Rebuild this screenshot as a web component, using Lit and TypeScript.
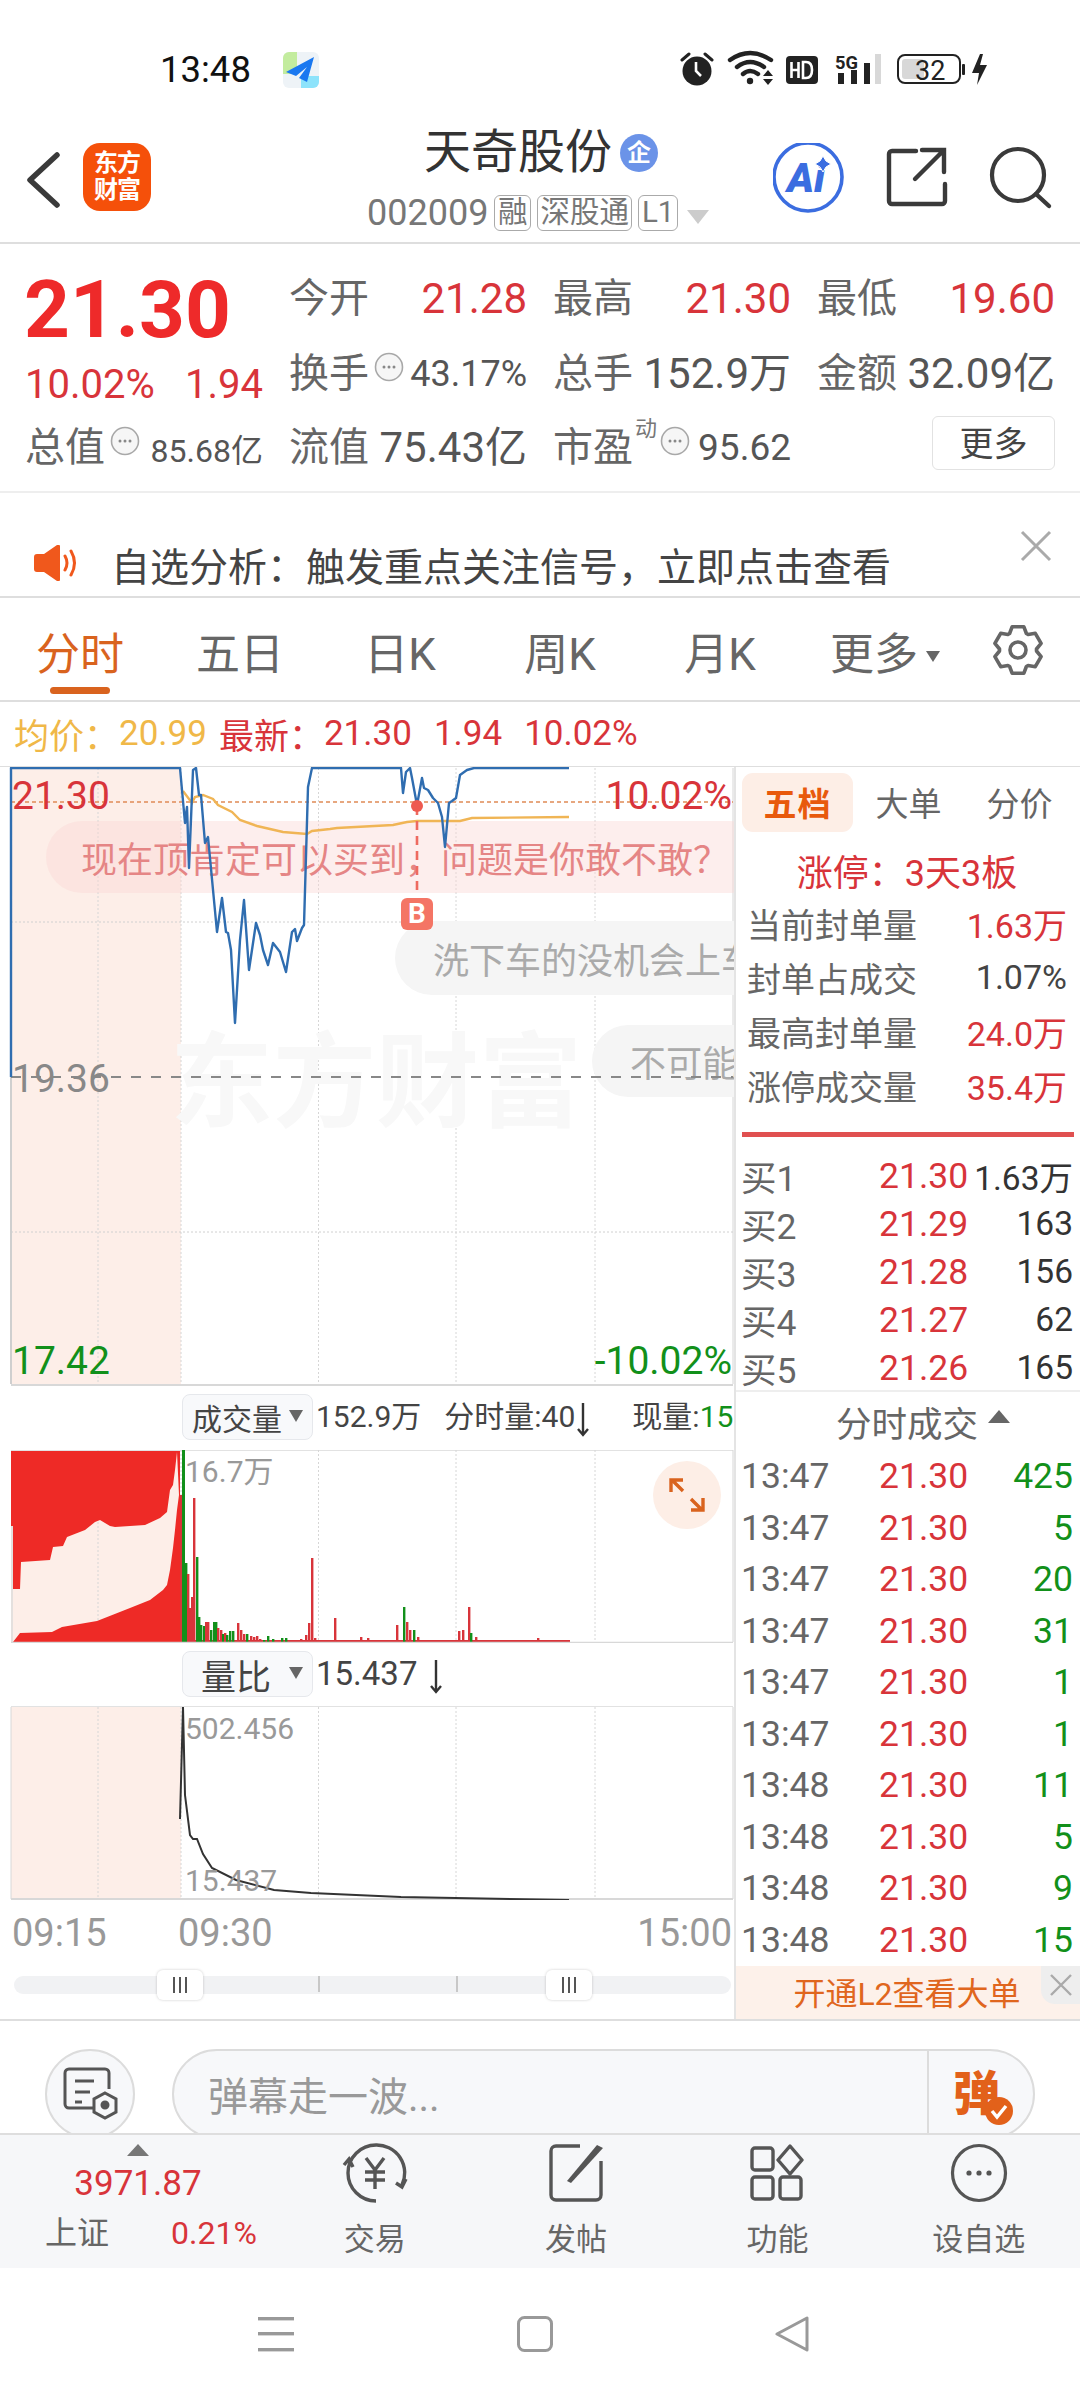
import {css, html, LitElement, svg} from 'lit';
import {customElement} from 'lit/decorators.js';

type Pt = [number, number];

const toPath = (pts: Pt[]) => pts.map((p) => p.join(',')).join(' ');

const BLUE_LINE: Pt[] = [[11, 1077], [11, 768], [180, 768], [185, 823], [187, 807], [189, 868], [193, 770], [196, 768], [199, 795], [201, 795], [205, 843], [208, 837], [217, 932], [222, 898], [226, 932], [228, 933], [231, 950], [235, 1023], [240, 940], [244, 900], [249, 970], [256, 923], [260, 935], [263, 950], [268, 965], [273, 943], [280, 952], [286, 972], [292, 932], [295, 929], [297, 941], [302, 928], [304, 925], [308, 787], [312, 768], [401, 768], [403, 793], [406, 772], [410, 768], [412, 778], [417, 805], [422, 778], [424, 788], [428, 790], [433, 798], [438, 803], [442, 817], [445, 847], [449, 803], [452, 801], [456, 798], [460, 775], [467, 770], [474, 768], [569, 768]];

const AVG_LINE: Pt[] = [[183, 791], [192, 803], [195, 797], [203, 795], [213, 799], [218, 805], [232, 812], [240, 820], [257, 826], [283, 832], [307, 834], [312, 831], [330, 829], [337, 828], [393, 825], [407, 822], [417, 821], [460, 821], [472, 818], [569, 817]];

const RATIO_LINE: Pt[] = [[180, 1819], [183, 1707], [185, 1795], [190, 1835], [193, 1839], [197, 1839], [203, 1854], [212, 1868], [236, 1880], [274, 1890], [311, 1893], [401, 1897], [569, 1900]];

const CREAM_TOP: Pt[] = [[13, 1589], [20, 1589], [21, 1562], [50, 1560], [53, 1547], [63, 1546], [67, 1537], [85, 1530], [95, 1522], [100, 1520], [110, 1526], [115, 1527], [145, 1525], [160, 1518], [167, 1512], [170, 1490], [173, 1485], [175, 1470], [177, 1452]];
const CREAM_BOTTOM: Pt[] = [[179, 1495], [177, 1510], [175, 1530], [173, 1548], [170, 1570], [167, 1585], [163, 1590], [150, 1600], [130, 1608], [97, 1621], [62, 1627], [52, 1632], [20, 1633], [13, 1642]];

// x, top y, green?
const VOL_BARS: [number, number, boolean][] = [[180, 1495, false], [182, 1450, true], [185, 1563, true], [187, 1574, false], [189, 1608, false], [191, 1597, false], [193, 1498, false], [196, 1557, true], [198, 1617, true], [200, 1625, true], [203, 1626, true], [205, 1622, false], [207, 1622, false], [210, 1630, true], [213, 1622, true], [215, 1622, true], [217, 1628, false], [220, 1630, false], [222, 1634, true], [224, 1633, false], [226, 1635, true], [229, 1631, true], [232, 1631, true], [237, 1623, false], [240, 1630, false], [243, 1634, false], [246, 1634, true], [250, 1636, false], [253, 1637, false], [256, 1636, false], [259, 1639, false], [263, 1640, true], [267, 1636, true], [272, 1639, true], [281, 1638, true], [285, 1638, true], [300, 1639, false], [305, 1635, false], [308, 1623, false], [311, 1558, false], [314, 1638, false], [334, 1618, false], [360, 1637, false], [367, 1638, false], [396, 1625, false], [403, 1607, true], [406, 1622, false], [409, 1630, false], [413, 1630, true], [417, 1637, false], [458, 1631, false], [462, 1630, false], [468, 1607, false], [470, 1633, true], [475, 1637, false], [537, 1638, false]];

const LIMIT_ROWS = [
    {label: '当前封单量', value: '1.63万', red: true},
    {label: '封单占成交', value: '1.07%', red: false},
    {label: '最高封单量', value: '24.0万', red: true},
    {label: '涨停成交量', value: '35.4万', red: true},
];

const BUY_ROWS = [
    ['买1', '21.30', '1.63万'],
    ['买2', '21.29', '163'],
    ['买3', '21.28', '156'],
    ['买4', '21.27', '62'],
    ['买5', '21.26', '165'],
];

const TRADES = [
    ['13:47', '425'], ['13:47', '5'], ['13:47', '20'], ['13:47', '31'], ['13:47', '1'],
    ['13:47', '1'], ['13:48', '11'], ['13:48', '5'], ['13:48', '9'], ['13:48', '15'],
];

// six flat teeth, one pointing straight up
const gearPoints = () => {
    const pts: string[] = [];
    const at = (r: number, deg: number) => {
        const a = (deg * Math.PI) / 180;
        return `${(26 + r * Math.cos(a)).toFixed(1)},${(26 + r * Math.sin(a)).toFixed(1)}`;
    };
    for (let k = 0; k < 6; k++) {
        const t = 90 + 60 * k;
        pts.push(at(18.5, t - 27), at(24, t - 14), at(24, t + 14), at(18.5, t + 27));
    }
    return pts.join(' ');
};

const moreDots = html`<svg class="dots" width="30" height="30" viewBox="0 0 30 30"><circle cx="15" cy="15" r="13.5" fill="#f6f6f6" stroke="#a8a8a8" stroke-width="1.6"/><circle cx="10" cy="15" r="1.5" fill="#888"/><circle cx="15" cy="15" r="1.5" fill="#888"/><circle cx="20" cy="15" r="1.5" fill="#888"/></svg>`;

@customElement('app-root')
export class AppRoot extends LitElement {

    static styles = css`
        :host {
            display: block;
            width: 1080px;
            height: 2400px;
            overflow: hidden;
            background: #fff;
            color: #666;
            font-family: Roboto, "Noto Sans CJK SC", sans-serif;
            --red: #d8343a;
            --green: #12901a;
            --orange: #e2611a;
            --line: #dedede;
        }

        .red { color: var(--red); }
        .green { color: var(--green); }

        /* status bar */
        .status {
            height: 110px;
            display: flex;
            align-items: center;
            padding: 30px 0 0 160px;
            box-sizing: border-box;
            position: relative;
        }
        .status .time {
            font-size: 36.5px;
            color: #111;
            width: 123px;
            line-height: 40px;
        }
        .status .right {
            margin-left: auto;
            margin-right: 88px;
            display: flex;
            align-items: center;
        }

        /* title bar */
        .nav {
            height: 134px;
            box-sizing: border-box;
            border-bottom: 2px solid var(--line);
            display: flex;
            align-items: flex-start;
            position: relative;
        }
        .back { margin: 42px 0 0 26px; }
        .logo {
            margin: 33px 0 0 23px;
            width: 68px;
            height: 68px;
            border-radius: 17px;
            background: #f5500a;
            color: #fff;
            font-size: 24px;
            line-height: 27px;
            font-weight: 700;
            text-align: center;
            display: flex;
            align-items: center;
            justify-content: center;
            letter-spacing: -1px;
        }
        .title-box {
            position: absolute;
            left: 0;
            top: 0;
            width: 1080px;
            height: 132px;
        }
        .title {
            display: flex;
            align-items: center;
            height: 66px;
            padding: 18px 0 0 424px;
            box-sizing: border-box;
            font-size: 47px;
            color: #333;
            line-height: 56px;
        }
        .qy {
            width: 38px;
            height: 38px;
            border-radius: 50%;
            background: #6b93e8;
            color: #fff;
            font-size: 24px;
            font-weight: 700;
            line-height: 38px;
            text-align: center;
            margin-left: 8px;
            margin-top: 2px;
        }
        .sub {
            display: flex;
            align-items: center;
            padding: 19px 0 0 367px;
            font-size: 36px;
            line-height: 36px;
            color: #777;
        }
        .tag {
            border: 1.5px solid #aaa;
            border-radius: 6px;
            height: 36px;
            box-sizing: border-box;
            line-height: 32px;
            font-size: 29.5px;
            padding: 0 2.5px;
            margin-left: 6px;
            color: #777;
        }
        .sub .tri { margin-left: 9px; margin-top: 8px; }
        .actions {
            margin-left: auto;
            margin-right: 27px;
            margin-top: 33px;
            display: flex;
            align-items: flex-start;
            position: relative;
        }

        /* quote */
        .quote {
            height: 249px;
            box-sizing: border-box;
            border-bottom: 2px solid #eee;
            padding: 18px 0 0 25px;
            display: grid;
            grid-template-columns: 238px 238px 238px 238px;
            grid-template-rows: 74px 75px 73px;
            column-gap: 26px;
            align-items: center;
        }
        .quote .cell {
            display: flex;
            align-items: center;
            justify-content: space-between;
            white-space: nowrap;
        }
        .quote .label { font-size: 40px; color: #666; line-height: 48px; }
        .quote .num { font-size: 42px; color: #555; line-height: 48px; }
        .quote .num.red { color: var(--red); font-size: 42px; }
        .quote .small { font-size: 36px; color: #555; }
        .quote .smaller { font-size: 32px; color: #555; }
        .quote .group { display: flex; align-items: center; position: relative; }
        .dots { margin-left: 5px; margin-top: -14px; }
        .last {
            font-size: 80px;
            font-weight: 700;
            color: #ee2a2a;
            line-height: 70px;
            padding-top: 22px;
            margin-left: -1px;
        }
        .change {
            font-size: 40px;
            color: var(--red);
            line-height: 48px;
            padding-top: 22px;
        }
        .dong {
            font-size: 22px;
            color: #777;
            position: absolute;
            left: 82px;
            top: -7px;
            line-height: 24px;
        }
        .more-btn {
            width: 123px;
            height: 54px;
            box-sizing: border-box;
            border: 1.5px solid #e2e2e2;
            border-radius: 6px;
            font-size: 34px;
            color: #444;
            line-height: 54px;
            text-align: center;
            margin-left: auto;
            margin-top: -10px;
        }

        /* notice */
        .notice {
            height: 105px;
            box-sizing: border-box;
            border-bottom: 2px solid var(--line);
            display: flex;
            align-items: center;
            padding: 46px 0 0 34px;
            font-size: 39px;
            line-height: 50px;
            color: #444;
            white-space: nowrap;
        }
        .notice span { margin-left: 33px; }
        .notice .close { margin-left: auto; margin-right: 28px; margin-top: -43px; }

        /* period tabs */
        .tabs {
            height: 104px;
            box-sizing: border-box;
            border-bottom: 2px solid var(--line);
            display: flex;
            align-items: center;
            padding-top: 11px;
            font-size: 44px;
            color: #666;
            position: relative;
        }
        .tab {
            width: 160px;
            text-align: center;
            line-height: 60px;
            position: relative;
        }
        .tab.on { color: #d9631e; }
        .tab.on::after {
            content: '';
            position: absolute;
            left: 50px;
            top: 62px;
            width: 60px;
            height: 7px;
            border-radius: 4px;
            background: #d9631e;
        }
        .tab.more { margin-left: 5px; }
        .tab .caret { margin-left: 8px; margin-bottom: 8px; }
        .gear { position: absolute; left: 992px; top: 26px; }

        /* average row */
        .info {
            height: 65px;
            box-sizing: border-box;
            display: flex;
            align-items: center;
            padding: 0 0 2px 14px;
            font-size: 35px;
            color: var(--red);
            white-space: nowrap;
            border-bottom: 1px solid var(--line);
        }
        .info .avg { color: #f0b848; }
        .info .l { margin-left: 12px; }
        .info .v2 { margin-left: 22px; }

        .body {
            display: flex;
            height: 1254px;
            border-bottom: 2px solid var(--line);
            box-sizing: border-box;
        }
        .left {
            width: 734px;
            flex: none;
            border-right: 2px solid #e4e4e4;
            box-sizing: content-box;
            display: flex;
            flex-direction: column;
        }
        .panel {
            position: relative;
            overflow: hidden;
            flex: none;
            width: 734px;
        }
        .panel svg.layer {
            position: absolute;
            left: 0;
            top: 0;
        }
        .price { height: 619px; }
        .mark { position: absolute; font-size: 39px; line-height: 44px; white-space: nowrap; }
        .watermark {
            position: absolute;
            left: 170px;
            top: 256px;
            font-family: "Noto Sans CJK SC", sans-serif;
            font-size: 103px;
            line-height: 104px;
            font-weight: 700;
            color: #f8f8f8;
            white-space: nowrap;
        }
        .danmu {
            position: absolute;
            border-radius: 38px;
            white-space: nowrap;
            box-sizing: border-box;
            display: flex;
            align-items: center;
        }
        .danmu.a {
            left: 46px;
            top: 54px;
            width: 720px;
            height: 72px;
            padding-left: 35px;
            font-size: 36px;
            background: rgba(250, 215, 212, 0.42);
            color: #e58585;
        }
        .danmu.b {
            left: 395px;
            top: 154px;
            width: 420px;
            height: 74px;
            padding-left: 38px;
            font-size: 36px;
            background: #f5f5f5;
            color: #aaa;
        }
        .danmu.c {
            left: 592px;
            top: 258px;
            width: 300px;
            height: 72px;
            padding-left: 38px;
            font-size: 36px;
            background: #f5f5f5;
            color: #aaa;
        }
        .bee {
            position: absolute;
            left: 401px;
            top: 131px;
            width: 32px;
            height: 32px;
            border-radius: 6px;
            background: #f47565;
            color: #fff;
            font-size: 28px;
            font-weight: 700;
            line-height: 32px;
            text-align: center;
        }
        .strip {
            flex: none;
            display: flex;
            align-items: center;
            font-size: 30px;
            color: #444;
            white-space: nowrap;
            position: relative;
            box-sizing: border-box;
        }
        .strip.vol { height: 64px; padding-top: 8px; align-items: flex-start; }
        .strip.qb { height: 63px; padding-top: 8px; align-items: flex-start; }
        .select {
            margin-left: 182px;
            width: 131px;
            height: 46px;
            flex: none;
            box-sizing: border-box;
            border: 1.5px solid #e6e8ec;
            border-radius: 8px;
            background: #f8f9fb;
            color: #444;
            display: flex;
            align-items: center;
            padding-left: 9px;
            position: relative;
        }
        .select.big { font-size: 35px; padding-left: 18px; }
        .select svg { position: absolute; left: 106px; top: 15px; }
        .strip .v {
            margin-left: 3px;
            line-height: 46px;
        }
        .strip .v.big { font-size: 33px; }
        .strip .arrow { margin-left: 1px; margin-top: 9px; }
        .strip.qb .arrow { margin-left: 12px; }
        .vol-chart { height: 193px; }
        .ratio-chart { height: 194px; }
        .chart-num {
            position: absolute;
            left: 185px;
            font-size: 30px;
            line-height: 36px;
            color: #999;
        }
        .expand {
            position: absolute;
            left: 653px;
            top: 11px;
            width: 68px;
            height: 68px;
            border-radius: 50%;
            background: #fdeee6;
            display: flex;
            align-items: center;
            justify-content: center;
        }
        .axis {
            height: 60px;
            flex: none;
            position: relative;
            font-size: 38px;
            color: #999;
        }
        .axis span {
            position: absolute;
            top: 11px;
            line-height: 44px;
        }
        .slider {
            height: 59px;
            flex: none;
            position: relative;
            top: 1px;
        }
        .track {
            position: absolute;
            left: 14px;
            top: 15px;
            width: 717px;
            height: 18px;
            border-radius: 9px;
            background: #f1f2f4;
        }
        .tick {
            position: absolute;
            top: 15px;
            width: 1.5px;
            height: 16px;
            background: #c8c8c8;
        }
        .handle {
            position: absolute;
            top: 9px;
            width: 46px;
            height: 30px;
            border-radius: 6px;
            background: #fff;
            box-shadow: 0 0 3px rgba(0, 0, 0, 0.2);
            display: flex;
            align-items: center;
            justify-content: center;
            gap: 4px;
        }
        .handle i {
            width: 2px;
            height: 16px;
            background: #555;
        }

        /* right column */
        .right-col {
            flex: 1;
            display: flex;
            flex-direction: column;
            min-width: 0;
        }
        .rtabs {
            display: flex;
            padding: 6px 0 0 6px;
            height: 65px;
            box-sizing: border-box;
            font-size: 33px;
            color: #666;
            flex: none;
        }
        .rtabs div {
            width: 111px;
            height: 59px;
            text-align: center;
            line-height: 64px;
        }
        .rtabs .on {
            background: #fdeee6;
            border-radius: 11px;
            color: #e8590c;
            font-weight: 700;
            letter-spacing: 1px;
        }
        .limit {
            flex: none;
            height: 64px;
            display: flex;
            align-items: center;
            justify-content: center;
            font-size: 36px;
            color: var(--red);
            padding-right: 2px;
            padding-top: 12px;
            box-sizing: border-box;
        }
        .lrow {
            flex: none;
            height: 54px;
            display: flex;
            justify-content: space-between;
            align-items: center;
            padding: 0 13px 0 11px;
            font-size: 34px;
            color: #666;
        }
        .lrow b { font-weight: 400; color: #444; }
        .lrow b.red { color: var(--red); }
        .redline {
            flex: none;
            height: 5px;
            margin: 20px 6px 13px 6px;
            background: #e05050;
        }
        .brow {
            flex: none;
            height: 48px;
            display: grid;
            grid-template-columns: 138px 92px 1fr;
            align-items: center;
            padding: 0 7px 0 5px;
            font-size: 35.5px;
            color: #666;
        }
        .brow em { font-style: normal; font-size: 33.5px; color: #333; text-align: right; }
        .buys { flex: none; border-bottom: 2px solid #eee; padding-bottom: 0; }
        .thead {
            flex: none;
            height: 58.5px;
            display: flex;
            align-items: center;
            padding-left: 100px;
            font-size: 35.5px;
            color: #666;
        }
        .thead svg { margin-left: 10px; margin-bottom: 9px; }
        .trow {
            flex: none;
            height: 51.5px;
            display: grid;
            grid-template-columns: 138px 92px 1fr;
            align-items: center;
            padding: 0 7px 0 5px;
            font-size: 35.5px;
            color: #666;
        }
        .trow em { font-style: normal; color: var(--green); text-align: right; }
        .promo {
            flex: 1;
            background: #fdf1ea;
            color: #e0661e;
            font-size: 32px;
            display: flex;
            align-items: center;
            justify-content: center;
            position: relative;
            padding-right: 2px;
            padding-bottom: 2px;
        }
        .promo .x {
            position: absolute;
            right: 0;
            top: 0;
            width: 39px;
            height: 38px;
            background: #eeeeee;
            border-bottom-left-radius: 14px;
            display: flex;
            align-items: center;
            justify-content: center;
        }

        /* comment bar */
        .comment {
            height: 112px;
            overflow: hidden;
            display: flex;
            align-items: flex-start;
            padding: 28px 0 0 45px;
            box-sizing: border-box;
        }
        .round {
            width: 90px;
            height: 90px;
            flex: none;
            border-radius: 50%;
            box-sizing: border-box;
            border: 2px solid #dcdcdc;
            background: #f7f8fa;
            display: flex;
            align-items: center;
            justify-content: center;
        }
        .input {
            margin-left: 37px;
            width: 863px;
            height: 90px;
            flex: none;
            border-radius: 45px;
            box-sizing: border-box;
            border: 2px solid #dcdcdc;
            background: #f7f8fa;
            display: flex;
            align-items: center;
            padding-left: 34px;
            font-size: 40px;
            color: #999;
        }
        .input .send {
            margin-left: auto;
            width: 106px;
            height: 90px;
            flex: none;
            border-left: 2px solid #dcdcdc;
            box-sizing: border-box;
            position: relative;
            color: #e2611a;
            font-size: 47px;
            font-weight: 900;
            line-height: 90px;
            padding-left: 24px;
        }
        .input .send svg { position: absolute; left: 56px; top: 48px; }

        /* toolbar */
        .toolbar {
            height: 135px;
            box-sizing: border-box;
            border-top: 2px solid var(--line);
            background: #f6f7f9;
            display: flex;
        }
        .market {
            width: 274px;
            flex: none;
            display: flex;
            flex-direction: column;
            align-items: center;
            position: relative;
            padding-top: 27px;
            box-sizing: border-box;
        }
        .market .up { position: absolute; left: 127px; top: 9px; }
        .market .idx { font-size: 35px; color: var(--red); line-height: 44px; padding-left: 2px; }
        .market .sub2 {
            align-self: flex-start;
            display: flex;
            align-items: center;
            width: 100%;
            padding: 7px 0 0 45px;
            box-sizing: border-box;
            font-size: 32px;
            line-height: 40px;
            color: #666;
        }
        .market .sub2 b { font-weight: 400; color: var(--red); margin-left: 62px; }
        .tool {
            width: 201.4px;
            flex: none;
            display: flex;
            flex-direction: column;
            align-items: center;
            font-size: 31px;
            color: #666;
        }
        .tool svg { margin-top: 8px; height: 60px; }
        .tool span { line-height: 40px; margin-top: 17px; white-space: nowrap; }

        /* android nav */
        .softkeys {
            height: 132px;
            position: relative;
        }
        .softkeys svg { position: absolute; top: 48px; }
    `;

    private _statusIcons() {
        return html`
            <svg width="312" height="40" viewBox="680 50 312 40">
                <g fill="#222">
                    <circle cx="697" cy="71" r="14.5"/>
                    <path d="M682 60 l7-6 M712 60 l-7-6" stroke="#222" stroke-width="3" stroke-linecap="round"/>
                    <path d="M696 62 v9 l5 5" fill="none" stroke="#fff" stroke-width="2.6"/>
                    <path d="M730 60 q20-14 41 0 M737 67 q13-10 27 0 M743 74 q7-6 15 0" fill="none" stroke="#222" stroke-width="4.4" stroke-linecap="round"/>
                    <circle cx="750" cy="81" r="3.2"/>
                    <path d="M763 76 l5-6 5 6z M763 79 h10 l-5 6z"/>
                    <rect x="786" y="56" width="32" height="28" rx="4"/>
                    <path d="M791.5 62 v16 M791.5 70 h7 M798.5 62 v16" stroke="#fff" stroke-width="2.6" fill="none"/>
                    <path d="M803 62 v16 h3 q6 0 6-8 t-6-8z" stroke="#fff" stroke-width="2.6" fill="none"/>
                </g>
                <text x="835" y="69" font-family="Roboto" font-size="18" font-weight="700" fill="#222" textLength="23" lengthAdjust="spacingAndGlyphs">5G</text>
                <g fill="#222">
                    <rect x="838" y="73" width="6" height="11"/>
                    <rect x="851" y="70" width="6" height="14"/>
                    <rect x="864" y="63" width="6" height="21"/>
                </g>
                <rect x="875" y="54" width="6" height="30" fill="#d8d8d8"/>
                <rect x="898" y="55" width="62" height="28" rx="7" fill="#fff" stroke="#222" stroke-width="2"/>
                <rect x="902" y="59" width="22" height="20" rx="3" fill="#d8d8d8"/>
                <text x="915" y="80" font-family="Roboto" font-size="27" fill="#222">32</text>
                <rect x="962" y="64" width="3" height="11" rx="1" fill="#222"/>
                <path d="M980 54 l-8 19 h7 l-2 12 10-20 h-7 l3-11z" fill="#222"/>
            </svg>`;
    }

    private _shade(top: number, bottom: number) {
        return svg`<rect x="11" y="${top}" width="170" height="${bottom - top}" fill="#fdeee8"/>`;
    }

    private _grid(top: number, bottom: number) {
        return [98, 181, 318.5, 456, 595, 733].map((x) => svg`
            <line x1="${x}" y1="${top}" x2="${x}" y2="${bottom}" stroke="#d6d6d6" stroke-width="1" stroke-dasharray="${x === 733 ? '0' : '2 2'}"/>`);
    }

    private _priceChart() {
        return html`
            <div class="panel price">
                <svg class="layer" width="734" height="619" viewBox="0 767 734 619">
                    ${this._shade(768, 1384)}
                    ${this._grid(768, 1384)}
                    <line x1="11" y1="922" x2="733" y2="922" stroke="#d0d0d0" stroke-dasharray="2 2"/>
                    <line x1="11" y1="1232" x2="733" y2="1232" stroke="#d0d0d0" stroke-dasharray="2 2"/>
                    <line x1="11" y1="1385" x2="733" y2="1385" stroke="#d8d8d8" stroke-width="2"/>
                    <line x1="11" y1="1077" x2="11" y2="1384" stroke="#cfcfcf" stroke-width="2"/>
                </svg>
                <div class="watermark">东方财富</div>
                <div class="danmu a">现在顶肯定可以买到，问题是你敢不敢？</div>
                <div class="danmu b">洗下车的没机会上车</div>
                <div class="danmu c">不可能</div>
                <svg class="layer" width="734" height="619" viewBox="0 767 734 619">
                    <line x1="11" y1="802" x2="733" y2="802" stroke="#e08a55" stroke-width="1.4" stroke-dasharray="4 3"/>
                    <line x1="11" y1="1077" x2="733" y2="1077" stroke="#888" stroke-width="2" stroke-dasharray="10 10"/>
                    <polyline points="${toPath(AVG_LINE)}" fill="none" stroke="#f0b555" stroke-width="2.4"/>
                    <polyline points="${toPath(BLUE_LINE)}" fill="none" stroke="#2f6db0" stroke-width="2.4" stroke-linejoin="round"/>
                    <line x1="417" y1="806" x2="417" y2="896" stroke="#ee6a60" stroke-width="2.6" stroke-dasharray="9 6"/>
                    <circle cx="417" cy="806" r="6" fill="#ee5a50"/>
                </svg>
                <div class="bee">B</div>
                <div class="mark red" style="left:12px;top:7px">21.30</div>
                <div class="mark red" style="right:2px;top:7px">10.02%</div>
                <div class="mark" style="left:12px;top:290px;color:#888">19.36</div>
                <div class="mark green" style="left:12px;top:572px">17.42</div>
                <div class="mark green" style="right:2px;top:572px">-10.02%</div>
            </div>`;
    }

    private _volChart() {
        const cream = [...CREAM_TOP, ...CREAM_BOTTOM];
        return html`
            <div class="panel vol-chart">
                <svg class="layer" width="734" height="193" viewBox="0 1450 734 193">
                    <line x1="11" y1="1450.5" x2="733" y2="1450.5" stroke="#e2e2e2"/>
                    ${this._grid(1450, 1642)}
                    <rect x="11" y="1451" width="169" height="192" fill="#ee2a26"/>
                    <polygon points="${toPath(cream)}" fill="#fdeee8"/>
                    <rect x="11" y="1526" width="2" height="116" fill="#e4e0de"/>
                    <line x1="98" y1="1522" x2="98" y2="1620" stroke="#d6d6d6" stroke-dasharray="2 2"/>
                    <rect x="181" y="1640" width="389" height="3" fill="#d8343a"/>
                    ${VOL_BARS.map(([x, top, green]) => svg`
                        <rect x="${x}" y="${top}" width="${x === 182 ? 3 : 2.4}" height="${1643 - top}" fill="${green ? '#12901a' : '#d8343a'}"/>`)}
                    <line x1="11" y1="1642.5" x2="733" y2="1642.5" stroke="#d8d8d8" stroke-width="1.4"/>
                </svg>
                <div class="chart-num" style="top:4px">16.7万</div>
                <div class="expand">
                    <svg width="36" height="36" viewBox="0 0 36 36" fill="none" stroke="#d9631e" stroke-width="3.4">
                        <path d="M2 15 V3 H14 M3 3 L14 14 M34 21 V33 H22 M33 33 L22 22"/>
                    </svg>
                </div>
            </div>`;
    }

    private _ratioChart() {
        return html`
            <div class="panel ratio-chart">
                <svg class="layer" width="734" height="194" viewBox="0 1706 734 194">
                    <line x1="11" y1="1706.5" x2="733" y2="1706.5" stroke="#e2e2e2"/>
                    ${this._shade(1707, 1899)}
                    ${this._grid(1707, 1899)}
                    <line x1="11" y1="1899" x2="733" y2="1899" stroke="#d8d8d8" stroke-width="2"/>
                    <line x1="11" y1="1707" x2="11" y2="1899" stroke="#d8d8d8"/>
                    <polyline points="${toPath(RATIO_LINE)}" fill="none" stroke="#333" stroke-width="2"/>
                </svg>
                <div class="chart-num" style="top:5px">502.456</div>
                <div class="chart-num" style="top:157px">15.437</div>
            </div>`;
    }

    private _caret() {
        return html`<svg width="14" height="12" viewBox="0 0 14 12"><path d="M0 0 H14 L7 12z" fill="#666"/></svg>`;
    }

    private _downArrow() {
        return html`<svg class="arrow" width="14" height="34" viewBox="0 0 14 34" fill="none" stroke="#333" stroke-width="2.4"><path d="M7 0 V32 M2 26 L7 32 L12 26"/></svg>`;
    }

    private _rightCol() {
        return html`
            <div class="right-col">
                <div class="rtabs">
                    <div class="on">五档</div>
                    <div>大单</div>
                    <div>分价</div>
                </div>
                <div class="limit">涨停：3天3板</div>
                ${LIMIT_ROWS.map((r) => html`
                    <div class="lrow"><span>${r.label}</span><b class="${r.red ? 'red' : ''}">${r.value}</b></div>`)}
                <div class="redline"></div>
                <div class="buys">
                    ${BUY_ROWS.map((r) => html`
                        <div class="brow"><span>${r[0]}</span><span class="red">${r[1]}</span><em>${r[2]}</em></div>`)}
                </div>
                <div class="thead">分时成交
                    <svg width="22" height="13" viewBox="0 0 22 13"><path d="M11 0 L22 13 H0z" fill="#666"/></svg>
                </div>
                ${TRADES.map((t) => html`
                    <div class="trow"><span>${t[0]}</span><span class="red">21.30</span><em>${t[1]}</em></div>`)}
                <div class="promo">开通L2查看大单
                    <div class="x">
                        <svg width="24" height="24" viewBox="0 0 24 24" stroke="#aaa" stroke-width="2.4"><path d="M2 2 L22 22 M22 2 L2 22"/></svg>
                    </div>
                </div>
            </div>`;
    }

    render() {
        return html`
            <div class="status">
                <div class="time">13:48</div>
                <svg width="36" height="36" viewBox="0 0 36 36">
                    <rect width="36" height="36" rx="6" fill="#eef3f7"/>
                    <path d="M0 6 a6 6 0 0 1 6-6 H14 V22 H0z" fill="#c3ec9e"/>
                    <path d="M18 24 H36 V30 a6 6 0 0 1-6 6 H18z" fill="#8de3fb"/>
                    <path d="M31 5 L3 20 L13 24 L24 15 L16 26 L24 30z" fill="#1a78f0"/>
                </svg>
                <div class="right">${this._statusIcons()}</div>
            </div>

            <div class="nav">
                <div class="title-box">
                    <div class="title">天奇股份<span class="qy">企</span></div>
                    <div class="sub">002009
                        <span class="tag">融</span><span class="tag">深股通</span><span class="tag">L1</span>
                        <svg class="tri" width="22" height="14" viewBox="0 0 22 14"><path d="M0 0 H22 L11 14z" fill="#ccc"/></svg>
                    </div>
                </div>
                <svg class="back" width="34" height="56" viewBox="0 0 34 56" fill="none" stroke="#3a3a3a" stroke-width="5.5" stroke-linecap="round" stroke-linejoin="round"><path d="M31 3 L4 28 L31 53"/></svg>
                <div class="logo">东方<br>财富</div>
                <div class="actions">
                    <svg width="280" height="74" viewBox="773 143 280 74" fill="none">
                        <circle cx="808" cy="177" r="34" stroke="#3b6de0" stroke-width="3.6"/>
                        <text x="787" y="192" font-family="Roboto" font-size="41" font-weight="900" font-style="italic" fill="#3b6de0">Ai</text>
                        <path d="M823 156 l3 5 5 3-5 3-3 5-3-5-5-3 5-3z" fill="#3b6de0" stroke="#fff" stroke-width="1"/>
                        <path d="M916 151 H892 a3 3 0 0 0-3 3 V201 a3 3 0 0 0 3 3 H942 a3 3 0 0 0 3-3 V184 M915 179 L944 150 M922 150 H944 V172" stroke="#3a3a3a" stroke-width="4.4" stroke-linecap="round"/>
                        <circle cx="1018" cy="175" r="26" stroke="#3a3a3a" stroke-width="4.2"/>
                        <path d="M1036 194 L1049 206" stroke="#3a3a3a" stroke-width="4.4" stroke-linecap="round"/>
                    </svg>
                </div>
            </div>

            <div class="quote">
                <div class="last">21.30</div>
                <div class="cell"><span class="label">今开</span><span class="num red">21.28</span></div>
                <div class="cell"><span class="label">最高</span><span class="num red">21.30</span></div>
                <div class="cell"><span class="label">最低</span><span class="num red">19.60</span></div>

                <div class="cell change"><span>10.02%</span><span>1.94</span></div>
                <div class="cell"><span class="group"><span class="label">换手</span>${moreDots}</span><span class="small">43.17%</span></div>
                <div class="cell"><span class="label">总手</span><span class="num">152.9万</span></div>
                <div class="cell"><span class="label">金额</span><span class="num">32.09亿</span></div>

                <div class="cell"><span class="group"><span class="label">总值</span>${moreDots}</span><span class="smaller">85.68亿</span></div>
                <div class="cell"><span class="label">流值</span><span class="num">75.43亿</span></div>
                <div class="cell"><span class="group"><span class="label">市盈</span><span class="dong">动</span><span style="width:22px"></span>${moreDots}</span><span class="small" style="font-size:37px">95.62</span></div>
                <div class="cell"><span class="more-btn">更多</span></div>
            </div>

            <div class="notice">
                <svg width="44" height="36" viewBox="0 0 44 36" style="margin-top:-10px">
                    <path d="M0 12 a3 3 0 0 1 3-3 H10 L23 0 a2 2 0 0 1 3 1 V35 a2 2 0 0 1-3 1 L10 27 H3 a3 3 0 0 1-3-3z" fill="#f0581c"/>
                    <path d="M31 11 q4 7 0 14 M37 6 q7 12 0 24" fill="none" stroke="#f0581c" stroke-width="3" stroke-linecap="round"/>
                </svg>
                <span>自选分析：触发重点关注信号，立即点击查看</span>
                <svg class="close" width="32" height="32" viewBox="0 0 32 32" stroke="#aaa" stroke-width="3"><path d="M2 2 L30 30 M30 2 L2 30"/></svg>
            </div>

            <div class="tabs">
                <div class="tab on">分时</div>
                <div class="tab">五日</div>
                <div class="tab">日K</div>
                <div class="tab">周K</div>
                <div class="tab">月K</div>
                <div class="tab more">更多<svg class="caret" width="14" height="11" viewBox="0 0 14 11"><path d="M0 0 H14 L7 11z" fill="#666"/></svg></div>
                <svg class="gear" width="52" height="52" viewBox="0 0 52 52" fill="none" stroke="#666" stroke-width="3.6" stroke-linejoin="round">
                    <polygon points="${gearPoints()}"/>
                    <circle cx="26" cy="26" r="8"/>
                </svg>
            </div>

            <div class="info">
                <span class="avg">均价：</span><span class="avg">20.99</span>
                <span class="l">最新：</span><span>21.30</span>
                <span class="v2">1.94</span><span class="v2">10.02%</span>
            </div>

            <div class="body">
                <div class="left">
                    ${this._priceChart()}
                    <div class="strip vol">
                        <div class="select">成交量${this._caret()}</div>
                        <span class="v">152.9万</span>
                        <span class="v" style="margin-left:23px">分时量:40</span>${this._downArrow()}
                        <span class="v" style="margin-left:42px">现量:<span class="green">15</span></span>
                    </div>
                    ${this._volChart()}
                    <div class="strip qb">
                        <div class="select big">量比${this._caret()}</div>
                        <span class="v big">15.437</span>${this._downArrow()}
                    </div>
                    ${this._ratioChart()}
                    <div class="axis">
                        <span style="left:12px">09:15</span>
                        <span style="left:178px">09:30</span>
                        <span style="right:2px">15:00</span>
                    </div>
                    <div class="slider">
                        <div class="track"></div>
                        <div class="tick" style="left:318px"></div>
                        <div class="tick" style="left:456px"></div>
                        <div class="handle" style="left:157px"><i></i><i></i><i></i></div>
                        <div class="handle" style="left:546px"><i></i><i></i><i></i></div>
                    </div>
                </div>
                ${this._rightCol()}
            </div>

            <div class="comment">
                <div class="round">
                    <svg width="56" height="54" viewBox="0 0 56 54" fill="none" stroke="#555" stroke-width="3">
                        <path d="M36 41 H7 a4 4 0 0 1-4-4 V6 a4 4 0 0 1 4-4 H43 a4 4 0 0 1 4 4 V22"/>
                        <path d="M13 14 H32 M13 25 H28 M13 35 H20"/>
                        <path d="M43 26 L54 32 V45 L43 51 L32 45 V32z" fill="#f7f8fa"/>
                        <circle cx="43" cy="38" r="3" fill="#555"/>
                    </svg>
                </div>
                <div class="input">弹幕走一波...
                    <div class="send">弹
                        <svg width="28" height="28" viewBox="0 0 28 28"><circle cx="14" cy="14" r="14" fill="#e2611a"/><path d="M7 14 L12 20 L21 9" fill="none" stroke="#fff" stroke-width="3.4"/></svg>
                    </div>
                </div>
            </div>

            <div class="toolbar">
                <div class="market">
                    <svg class="up" width="22" height="12" viewBox="0 0 22 12"><path d="M11 0 L22 12 H0z" fill="#777"/></svg>
                    <div class="idx">3971.87</div>
                    <div class="sub2">上证<b>0.21%</b></div>
                </div>
                <div class="tool">
                    <svg width="66" height="60" viewBox="0 0 66 60" fill="none" stroke="#555" stroke-width="3.4">
                        <path d="M34 2 A28 28 0 0 0 34 58 M2 22 L7 16 L11 24"/>
                        <path d="M34 2 A28 28 0 0 1 60 42 M64 36 L60 44 L54 40"/>
                        <path d="M24 15 L33 27 L42 15 M33 27 V46 M23 29 H43 M23 37 H43"/>
                    </svg>
                    <span>交易</span>
                </div>
                <div class="tool">
                    <svg width="56" height="60" viewBox="0 0 56 60" fill="none" stroke="#555" stroke-width="3.4">
                        <path d="M32 3 H8 a5 5 0 0 0-5 5 V52 a5 5 0 0 0 5 5 H48 a5 5 0 0 0 5-5 V18"/>
                        <path d="M50 2 L56 5 L24 40 L20 38z" fill="#555" stroke="none" transform="translate(-1 0)"/>
                    </svg>
                    <span>发帖</span>
                </div>
                <div class="tool">
                    <svg width="54" height="60" viewBox="0 0 54 60" fill="none" stroke="#555" stroke-width="3.4">
                        <rect x="2" y="5" width="21" height="22" rx="3"/>
                        <path d="M40 3 L52 17 L40 31 L28 17z" stroke-linejoin="round"/>
                        <rect x="2" y="34" width="21" height="22" rx="3"/>
                        <rect x="30" y="34" width="21" height="22" rx="3"/>
                    </svg>
                    <span>功能</span>
                </div>
                <div class="tool">
                    <svg width="58" height="60" viewBox="0 0 58 60" fill="none" stroke="#555" stroke-width="3.2">
                        <ellipse cx="29" cy="30" rx="26.5" ry="27.5"/>
                        <circle cx="19" cy="30" r="2.6" fill="#555" stroke="none"/>
                        <circle cx="29" cy="30" r="2.6" fill="#555" stroke="none"/>
                        <circle cx="39" cy="30" r="2.6" fill="#555" stroke="none"/>
                    </svg>
                    <span>设自选</span>
                </div>
            </div>

            <div class="softkeys">
                <svg style="left:258px" width="36" height="36" viewBox="0 0 36 36" fill="#999"><rect width="36" height="3.4" y="1"/><rect width="36" height="3.4" y="16"/><rect width="36" height="3.4" y="32"/></svg>
                <svg style="left:517px" width="36" height="36" viewBox="0 0 36 36" fill="none" stroke="#999" stroke-width="3"><rect x="1.5" y="1.5" width="33" height="33" rx="6"/></svg>
                <svg style="left:775px" width="34" height="36" viewBox="0 0 34 36" fill="none" stroke="#999" stroke-width="3" stroke-linejoin="round"><path d="M32 2 V34 L2 18z"/></svg>
            </div>
        `;
    }
}
